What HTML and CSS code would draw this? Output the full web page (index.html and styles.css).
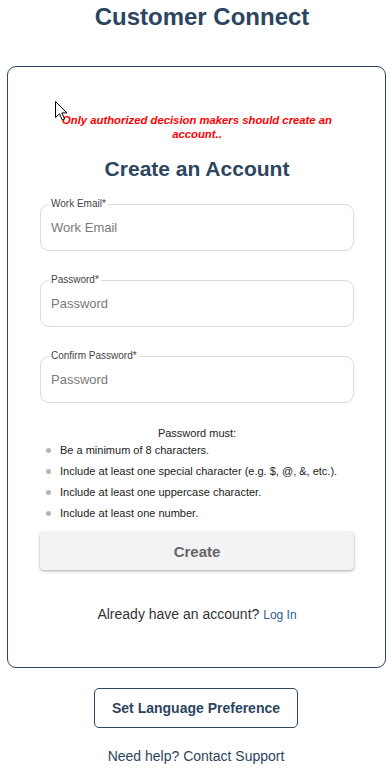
FILE: index.html
```html
<!DOCTYPE html>
<html lang="en">
<head>
  <meta charset="UTF-8">
  <title>Customer Connect - Create an Account</title>
  <link rel="stylesheet" href="styles.css">
</head>
<body>
  <h1 class="brand">Customer Connect</h1>

  <div class="card">
    <p class="notice">Only authorized decision makers should create an account..</p>
    <h2 class="card-title">Create an Account</h2>

    <form class="signup">
      <fieldset class="field">
        <legend>Work Email*</legend>
        <input type="email" placeholder="Work Email">
      </fieldset>
      <fieldset class="field">
        <legend>Password*</legend>
        <input type="password" placeholder="Password">
      </fieldset>
      <fieldset class="field">
        <legend>Confirm Password*</legend>
        <input type="password" placeholder="Password">
      </fieldset>

      <div class="rules">
        <p class="rules-title">Password must:</p>
        <ul>
          <li>Be a minimum of 8 characters.</li>
          <li>Include at least one special character (e.g. $, @, &amp;, etc.).</li>
          <li>Include at least one uppercase character.</li>
          <li>Include at least one number.</li>
        </ul>
      </div>

      <button type="button" class="btn-create">Create</button>
    </form>

    <p class="login">Already have an account? <a href="#login">Log In</a></p>

    <!-- mouse pointer from the capture -->
    <svg class="cursor" width="13" height="20" viewBox="0 0 13 20">
      <path d="M0.5 0.5 L0.5 16.5 L4.5 12.8 L7.3 19 L9.6 18 L6.9 11.9 L12 11.9 Z" fill="#fff" stroke="#000" stroke-width="1" stroke-linejoin="miter"/>
    </svg>
  </div>

  <div class="footer">
    <button type="button" class="btn-lang">Set Language Preference</button>
    <p class="help">Need help? Contact Support</p>
  </div>
</body>
</html>
```

FILE: styles.css
```css
body {
  margin: 0;
  font-family: "Liberation Sans", Arial, sans-serif;
  color: #222;
  background: #fff;
}
.brand {
  margin: 3px 0 0;
  padding-left: 12px;
  font-size: 24px;
  line-height: 28px;
  text-align: center;
  color: #2c4560;
}
.card {
  position: relative;
  margin: 35px 6px 0 7px;
  padding: 46px 31px 0 32px;
  height: 554px;
  border: 1px solid #2c4560;
  border-radius: 9px;
}
.notice {
  margin: 0;
  font-size: 11.3px;
  line-height: 14px;
  font-weight: bold;
  font-style: italic;
  text-align: center;
  color: #ff0000;
}
.card-title {
  margin: 16px 0 0;
  font-size: 21px;
  line-height: 24px;
  text-align: center;
  color: #2c4560;
}
.signup { margin-top: 17px; }
.field {
  margin: 0 0 23px;
  padding: 0 10px 6px;
  border: 1px solid #dcdcdc;
  border-radius: 9px;
  min-width: 0;
}
.field legend {
  margin-left: -2px;
  padding: 0 2px;
  font-size: 10px;
  line-height: 12px;
  color: #444;
}
.field input {
  display: block;
  width: 100%;
  height: 34px;
  padding: 0;
  border: none;
  outline: none;
  font-family: inherit;
  font-size: 13px;
  color: #333;
  background: transparent;
}
.field input::placeholder { color: #7a7a7a; }
.rules-title {
  margin: 0;
  font-size: 11px;
  line-height: 14px;
  text-align: center;
}
.rules ul {
  margin: 0;
  padding: 0;
  list-style: none;
}
.rules li {
  position: relative;
  padding-left: 20px;
  font-size: 11px;
  line-height: 21px;
}
.rules li::before {
  content: "";
  position: absolute;
  left: 6px;
  top: 8px;
  width: 5px;
  height: 5px;
  border-radius: 50%;
  background: #b5b5b5;
}
.btn-create {
  display: block;
  width: 100%;
  height: 38px;
  margin-top: 8px;
  border: none;
  border-radius: 4px;
  background: #f3f3f5;
  box-shadow: 0 1px 3px rgba(0,0,0,0.35);
  font-family: inherit;
  font-size: 15px;
  font-weight: bold;
  color: #666;
}
.login {
  margin: 35px 0 0;
  font-size: 14px;
  line-height: 18px;
  text-align: center;
  color: #333;
}
.login a {
  font-size: 12px;
  color: #2d5d8e;
  text-decoration: none;
}
.cursor {
  position: absolute;
  left: 47px;
  top: 34px;
}
.footer {
  display: flex;
  flex-direction: column;
  align-items: center;
  margin-top: 20px;
}
.btn-lang {
  height: 40px;
  padding: 0 17px;
  border: 1px solid #2c4560;
  border-radius: 5px;
  background: #fff;
  font-family: inherit;
  font-size: 14px;
  font-weight: bold;
  color: #2c4560;
}
.help {
  margin: 19px 0 0;
  font-size: 14px;
  line-height: 18px;
  color: #2c4560;
}
```
